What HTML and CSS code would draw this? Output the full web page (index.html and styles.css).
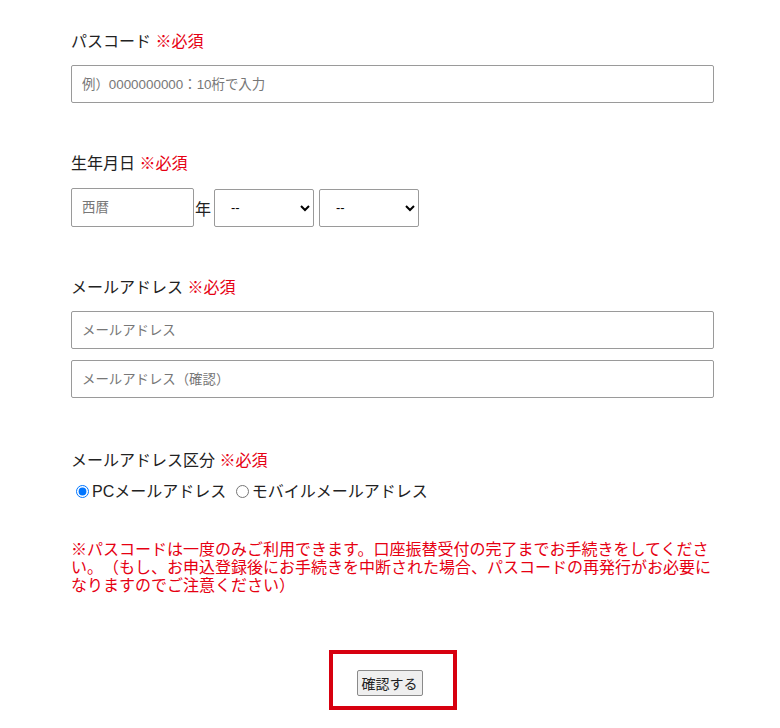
FILE: index.html
```html
<!DOCTYPE html>
<html lang="ja">
<head>
  <meta charset="UTF-8">
  <meta name="viewport" content="width=device-width, initial-scale=1.0">
  <title>お申込登録</title>
  <link rel="stylesheet" href="styles.css">
</head>
<body>
  <form class="entry" onsubmit="return false;">
    <div class="field">
      <p class="label">パスコード <span class="req">※必須</span></p>
      <input class="text" type="text" placeholder="例）0000000000：10桁で入力">
    </div>

    <div class="field">
      <p class="label">生年月日 <span class="req">※必須</span></p>
      <div class="birth">
        <input class="text year" type="text" placeholder="西暦">
        <span class="unit">年</span>
        <select class="pick">
          <option>--</option>
        </select>
        <select class="pick">
          <option>--</option>
        </select>
      </div>
    </div>

    <div class="field">
      <p class="label">メールアドレス <span class="req">※必須</span></p>
      <input class="text" type="email" placeholder="メールアドレス">
      <input class="text" type="email" placeholder="メールアドレス（確認）">
    </div>

    <div class="field">
      <p class="label">メールアドレス区分 <span class="req">※必須</span></p>
      <div class="radios">
        <label><input type="radio" name="kind" checked>PCメールアドレス</label>
        <label><input type="radio" name="kind">モバイルメールアドレス</label>
      </div>
    </div>

    <p class="note">※パスコードは一度のみご利用できます。口座振替受付の完了までお手続きをしてください。（もし、お申込登録後にお手続きを中断された場合、パスコードの再発行がお必要になりますのでご注意ください）</p>

    <div class="submit">
      <button type="submit">確認する</button>
    </div>
  </form>
</body>
</html>
```

FILE: styles.css
```css
body {
  margin: 0;
  font-family: "Liberation Sans", "Noto Sans CJK JP", sans-serif;
  color: #222;
  background: #fff;
  text-spacing-trim: space-all;
}
.entry {
  width: 643px;
  padding: 30px 0 0 71px;
}
.field {
  margin-bottom: 49px;
}
.label {
  margin: 0 0 11px;
  font-size: 16px;
  line-height: 24px;
}
.req {
  color: #e60012;
}
.text {
  display: block;
  box-sizing: border-box;
  width: 100%;
  height: 38px;
  margin: 0 0 11px;
  padding: 0 10px;
  border: 1px solid #9a9a9a;
  border-radius: 2px;
  font-family: "Liberation Sans", "Noto Sans CJK JP", sans-serif;
  font-size: 13.4px;
}
.text::placeholder {
  color: #777;
}
.birth {
  display: flex;
  align-items: center;
}
.text.year {
  width: 123px;
  height: 39px;
  margin: 0;
}
.unit {
  margin: 0 3px 0 1px;
  font-size: 16px;
}
.pick {
  box-sizing: border-box;
  width: 100px;
  height: 38px;
  margin-right: 5px;
  padding: 0 8px 0 12px;
  border: 1px solid #9a9a9a;
  border-radius: 2px;
  background: #fff;
  font-size: 13px;
}
.field:nth-child(2) .label {
  margin-bottom: 12px;
}
.field:nth-child(3) {
  margin-bottom: 51px;
}
.field:nth-child(4) {
  margin-bottom: 37px;
}
.field:nth-child(4) .label {
  margin-bottom: 7px;
}
.radios {
  font-size: 16px;
  line-height: 24px;
}
.radios input {
  margin: 0 3px 0 5px;
  vertical-align: -1px;
}
.note {
  margin: 0 0 55px;
  color: #e60012;
  font-size: 16px;
  line-height: 18px;
}
.submit {
  width: 96px;
  margin: 0 auto;
  padding: 16px 0 10px 24px;
  border: 4px solid #d7000f;
}
.submit button {
  display: block;
  box-sizing: border-box;
  width: 66px;
  height: 26px;
  padding: 0;
  border: 1px solid #8a8a8a;
  border-radius: 2px;
  background: #efefef;
  color: #222;
  font-family: "Noto Sans CJK JP", sans-serif;
  font-size: 14px;
}
```
